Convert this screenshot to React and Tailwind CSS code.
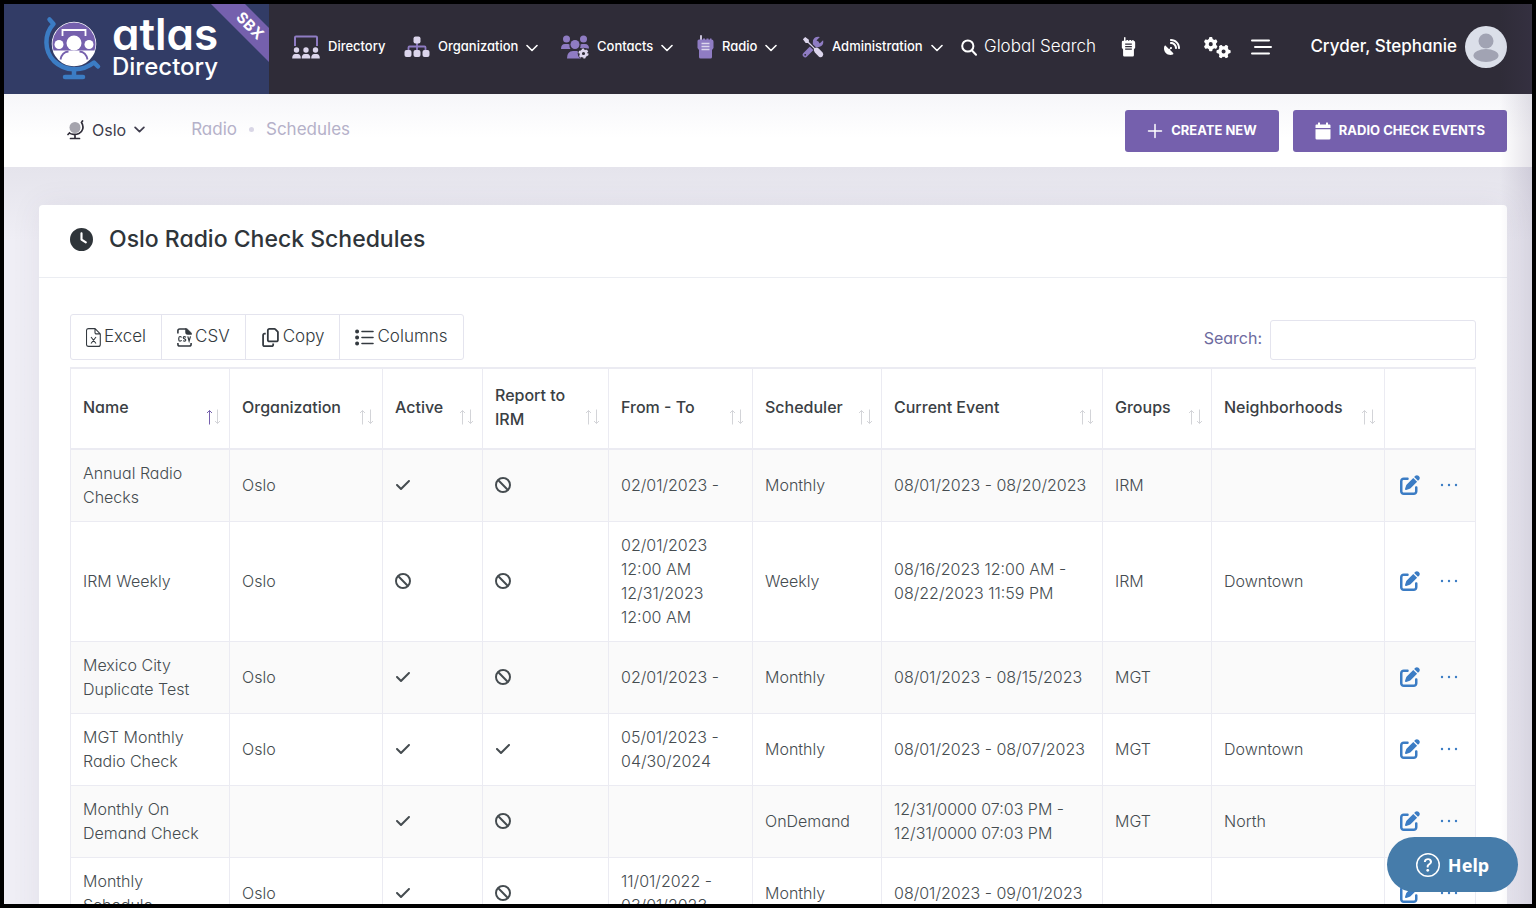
import React from 'react';
import { FaBan, FaCheck, FaClock, FaRegCopy, FaPenToSquare, FaSatelliteDish, FaGears } from 'react-icons/fa6';
import { BsQuestionCircle } from 'react-icons/bs';

const columns = [
  { label: 'Name', width: 'w-[159px]', sorted: true },
  { label: 'Organization', width: 'w-[153px]' },
  { label: 'Active', width: 'w-[100px]' },
  { label: 'Report to IRM', width: 'w-[126px]' },
  { label: 'From - To', width: 'w-[144px]' },
  { label: 'Scheduler', width: 'w-[129px]' },
  { label: 'Current Event', width: 'w-[221px]' },
  { label: 'Groups', width: 'w-[109px]' },
  { label: 'Neighborhoods', width: 'w-[173px]' },
];

const schedules = [
  { name: 'Annual Radio Checks', org: 'Oslo', active: true, report: false, range: ['02/01/2023 -'], scheduler: 'Monthly', event: ['08/01/2023 - 08/20/2023'], group: 'IRM', hood: '' },
  { name: 'IRM Weekly', org: 'Oslo', active: false, report: false, range: ['02/01/2023', '12:00 AM', '12/31/2023', '12:00 AM'], scheduler: 'Weekly', event: ['08/16/2023 12:00 AM -', '08/22/2023 11:59 PM'], group: 'IRM', hood: 'Downtown' },
  { name: 'Mexico City Duplicate Test', org: 'Oslo', active: true, report: false, range: ['02/01/2023 -'], scheduler: 'Monthly', event: ['08/01/2023 - 08/15/2023'], group: 'MGT', hood: '' },
  { name: 'MGT Monthly Radio Check', org: 'Oslo', active: true, report: true, range: ['05/01/2023 -', '04/30/2024'], scheduler: 'Monthly', event: ['08/01/2023 - 08/07/2023'], group: 'MGT', hood: 'Downtown' },
  { name: 'Monthly On Demand Check', org: '', active: true, report: false, range: [], scheduler: 'OnDemand', event: ['12/31/0000 07:03 PM -', '12/31/0000 07:03 PM'], group: 'MGT', hood: 'North' },
  { name: 'Monthly Schedule', org: 'Oslo', active: true, report: false, range: ['11/01/2022 -', '03/01/2023'], scheduler: 'Monthly', event: ['08/01/2023 - 09/01/2023'], group: '', hood: '' },
];

function LogoMark() {
  return (
    <svg viewBox="0 0 60 66" className="h-[66px] w-[60px]" aria-hidden="true">
      <g fill="none" stroke="#3b7cc4" strokeWidth="4.500" strokeLinecap="round" strokeLinejoin="round">
        <path d="M7.500 4.500 L11.500 9 C2 19 2 36 12 46 C23 56.500 40 57 52 47.500 L56 51.500" />
        <path d="M32 54v7" />
        <path d="M23 62h18" />
      </g>
      <circle cx="32" cy="29" r="21.500" fill="#fff" stroke="#fff" strokeWidth="1.500" />
      <path d="M11.500 35.500a21.500 21.500 0 1 1 41 0z" fill="#7560ad" />
      <path d="M20.500 21v-6h23v6" fill="none" stroke="#fff" strokeWidth="1.800" />
      <circle cx="17" cy="29.500" r="4.500" fill="#fff" />
      <circle cx="47" cy="29.500" r="4.500" fill="#fff" />
      <circle cx="32" cy="28" r="7.500" fill="#fff" />
      <path d="M18.500 44.500q1.500-7.500 8-8M45.500 44.500q-1.500-7.500-8-8" fill="none" stroke="#7560ad" strokeWidth="1.800" />
    </svg>
  );
}

function DirectoryIcon() {
  return (
    <svg viewBox="0 0 28 24" className="h-6 w-7" aria-hidden="true">
      <path d="M3 11V2.500Q3 1.500 4 1.500H24Q25 1.500 25 2.500V11" fill="none" stroke="#8f7cc3" strokeWidth="2" />
      {[4.500, 14, 23.500].map((x) => (
        <g key={x} fill="#dcd5ec">
          <circle cx={x} cy="15" r="2.700" />
          <path d={`M${x - 4.300} 23.500q0-4.500 3-4.500h2.600q3 0 3 4.500z`} />
        </g>
      ))}
    </svg>
  );
}

function SitemapIcon() {
  return (
    <svg viewBox="0 0 26 22" className="h-[22px] w-[26px]" aria-hidden="true">
      <path d="M13 6v9M4.500 15v-3.500q0-1 1-1h15q1 0 1 1V15" fill="none" stroke="#8f7cc3" strokeWidth="1.800" />
      <g fill="#dcd5ec">
        <rect x="9.500" y="0.500" width="7" height="7" rx="2" />
        <rect x="0.500" y="14" width="7" height="7" rx="2" />
        <rect x="9.500" y="14" width="7" height="7" rx="2" />
        <rect x="18.500" y="14" width="7" height="7" rx="2" />
      </g>
    </svg>
  );
}

function ContactsIcon() {
  return (
    <svg viewBox="0 0 28 24" className="h-6 w-7" aria-hidden="true">
      <g fill="#8f7cc3">
        <circle cx="5.500" cy="4" r="3.500" />
        <circle cx="22.500" cy="4" r="3.500" />
        <circle cx="14" cy="9.500" r="4.500" />
        <path d="M0 14q0-5 4-5h3q1 0 1.500.5q-.5 3 1 4.500z" />
        <path d="M28 13.500q0-4.500-4-4.500h-3q-1 0-1.500.5q.3 2-.5 3.500z" />
        <path d="M6 23.500q0-7.500 6-7.500h4.500q.8 5 4 7.500z" />
      </g>
      <circle cx="22.500" cy="18.500" r="5.800" fill="#2f2c38" />
      <circle cx="22.500" cy="18.500" r="2.800" fill="none" stroke="#dcd5ec" strokeWidth="2.400" />
      <circle cx="22.500" cy="18.500" r="4.300" fill="none" stroke="#dcd5ec" strokeWidth="1.600" strokeDasharray="2.250 2.250" />
    </svg>
  );
}

function RadioIcon({ className, body, lines, antenna }) {
  return (
    <svg viewBox="0 0 17 24" className={className} aria-hidden="true">
      <path d="M4 1v5" stroke={antenna} strokeWidth="1.800" strokeLinecap="round" />
      <path d="M2 4.500h4V3.500h2v1h1.500v-1h2v1H13v-1h1.500v1q2 .2 2 2V13l-1.500 2v7q0 1.500-1.500 1.500h-10q-1.500 0-1.500-1.500v-7L.5 13V6q0-1.500 1.500-1.500z" fill={body} />
      <path d="M4.500 8.500h8M4.500 11.500h8M4.500 14.500h8" stroke={lines} strokeWidth="1.300" />
    </svg>
  );
}

function ToolsIcon() {
  return (
    <svg viewBox="0 0 24 24" className="h-6 w-[22px]" aria-hidden="true">
      <path d="M3.500 20.500L16 8" stroke="#8f7cc3" strokeWidth="5.500" strokeLinecap="round" />
      <path d="M19.500 1Q14 0 12 4.500Q11 8 13 10.500Q17 13.500 21 11Q24 8.500 23 4.500L19.500 8L16.500 7.500L16 4.500z" fill="#8f7cc3" />
      <circle cx="3.500" cy="20.500" r="1" fill="#2f2c38" />
      <path d="M5 5l9 9" stroke="#2f2c38" strokeWidth="4" />
      <path d="M1 3.500L3.500 1L7.500 4V6.500L14 13Q16.500 12 18.500 14L22.500 18Q24 20 22.500 22T18.500 22.500L14 18Q12.500 16 13 14L6.500 7.500H4z" fill="#dcd5ec" />
    </svg>
  );
}

function SearchIcon() {
  return (
    <svg viewBox="0 0 16 17" className="h-[17px] w-4" fill="none" stroke="#fff" strokeWidth="2" strokeLinecap="round" aria-hidden="true">
      <circle cx="6.800" cy="7" r="5.600" />
      <path d="M11 11.500l4 4.200" />
    </svg>
  );
}

function GlobeIcon() {
  return (
    <svg viewBox="0 0 17 20" className="h-5 w-[17px]" aria-hidden="true">
      <circle cx="8" cy="7.500" r="5.500" fill="#a5a4ad" />
      <path d="M15.500 1l-1 1.500C17.500 7 15.500 12 12 13.500S4 14.500 2.500 13L1 14.500M8 14.500V18M3.500 18.500h9" fill="none" stroke="#2f2c38" strokeWidth="1.700" strokeLinecap="round" />
    </svg>
  );
}

function Chevron({ className, strokeWidth = 1.8 }) {
  return (
    <svg viewBox="0 0 12 8" className={className} fill="none" stroke="currentColor" strokeWidth={strokeWidth} strokeLinecap="round" strokeLinejoin="round" aria-hidden="true">
      <path d="M1 1.500l5 5l5-5" />
    </svg>
  );
}

function ExcelIcon() {
  return (
    <svg viewBox="0 0 15 19" className="h-[19px] w-[15px]" fill="none" stroke="#343a40" strokeWidth="1.100" aria-hidden="true">
      <path d="M2.500.6h6.500l5.300 5.300v10.500q0 2-2 2h-9.800q-2 0-2-2V2.600q0-2 2-2zM9 .8v3.600q0 1.500 1.500 1.500h3.600M5 9l5 6.500M10 9l-5 6.500" />
    </svg>
  );
}

function CsvIcon() {
  return (
    <svg viewBox="0 0 15 19" className="h-[19px] w-[15px]" fill="none" stroke="#343a40" aria-hidden="true">
      <path d="M.9 5.500V2.800Q.9 1 2.700 1H9M14.100 15v1.200q0 1.800-1.800 1.800H2.700Q.9 18 .9 16.200V15" strokeWidth="1.600" />
      <path d="M8.500.5h1.300L14.500 5v1.500h-4q-2 0-2-2z" fill="#343a40" strokeWidth=".5" />
      <path d="M4.500 9.500Q4 8.500 3 8.500T1.800 10v1.700q0 1.500 1.200 1.500t1.500-1M9 9.200q-2.500-1.400-2.700.3q0 1 1.200 1.300t1.300 1.200q-.3 1.800-2.800.7M10.800 8.300l1.300 4.700l1.400-4.700" strokeWidth="1.200" />
    </svg>
  );
}

function ListIcon() {
  return (
    <svg viewBox="0 0 19 17" className="h-[17px] w-[19px]" stroke="#343a40" strokeLinecap="round" aria-hidden="true">
      <path d="M7 2.500h11M7 8.500h11M7 14.500h11" strokeWidth="1.600" />
      <path d="M2 2.500h.2M2 8.500h.2M2 14.500h.2" strokeWidth="3.800" />
    </svg>
  );
}

function SortArrows({ sorted }) {
  return (
    <svg viewBox="0 0 15 16" className="mt-5 h-4 w-[15px] shrink-0" fill="none" strokeWidth="1" aria-hidden="true">
      <path d="M3.500 15.500V1.500M1 4l2.500-2.500l2.500 2.500" stroke={sorted ? '#7560ad' : '#d3d4d8'} />
      <path d="M11.500 .5v14M9 12l2.500 2.500l2.500-2.500" stroke="#d3d4d8" />
    </svg>
  );
}

function NavItem({ icon, label, chevron = true, className }) {
  return (
    <button type="button" className={`flex shrink-0 items-center gap-2 text-[13px] font-medium text-white ${className}`}>
      {icon}
      {label}
      {chevron && <Chevron className="mt-0.5 h-2 w-3" strokeWidth={1.6} />}
    </button>
  );
}

function ActionButton({ icon, children }) {
  return (
    <button type="button" className="flex h-[42px] items-center gap-2 rounded-[3px] bg-[#7560ad] px-[22px] text-[13px] font-bold text-white">
      {icon}
      {children}
    </button>
  );
}

function StatusIcon({ on }) {
  return on ? <FaCheck className="h-4 w-4" aria-label="Yes" /> : <FaBan className="h-4 w-4" aria-label="No" />;
}

function Lines({ items }) {
  return items.map((line, i) => <div key={i} className="whitespace-nowrap">{line}</div>);
}

function Header() {
  return (
    <header className="flex h-[90px] shrink-0 items-center bg-[#2f2c38] pr-[25px]">
      <a href="#" className="relative flex h-full w-[265px] shrink-0 items-center gap-[10px] bg-[#323c66] pb-0.5 pl-[38px] text-white">
        <LogoMark />
        <span className="flex flex-col">
          <span className="text-[44px] leading-[38px] font-semibold">atlas</span>
          <span className="text-[24px] leading-[28px] font-medium">Directory</span>
        </span>
        <span className="absolute top-0 right-0 h-16 w-16 overflow-hidden">
          <span className="absolute top-[10px] -left-[15px] flex h-6 w-[120px] rotate-45 items-center justify-center bg-[#7560ad] text-[15px] font-bold tracking-wide">SBX</span>
        </span>
      </a>
      <nav className="flex items-center pb-1 pl-[23px]">
        <NavItem className="w-[112px]" icon={<DirectoryIcon />} label="Directory" chevron={false} />
        <NavItem className="w-[157px]" icon={<SitemapIcon />} label="Organization" />
        <NavItem className="w-[136px]" icon={<ContactsIcon />} label="Contacts" />
        <NavItem className="w-[105px]" icon={<RadioIcon className="h-6 w-[17px]" body="#8f7cc3" lines="#dcd5ec" antenna="#dcd5ec" />} label="Radio" />
        <NavItem className="w-[159px]" icon={<ToolsIcon />} label="Administration" />
        <button type="button" className="flex shrink-0 items-center gap-[7px] text-[17px] font-light whitespace-nowrap text-white">
          <SearchIcon />
          Global Search
        </button>
      </nav>
      <div className="ml-auto flex shrink-0 items-center pb-1 text-white">
        <button type="button" aria-label="Radios" className="mr-7">
          <RadioIcon className="h-5 w-[15px]" body="#fff" lines="#2f2c38" antenna="#fff" />
        </button>
        <button type="button" aria-label="Satellite" className="mr-6"><FaSatelliteDish className="h-4 w-4" /></button>
        <button type="button" aria-label="Settings" className="mr-5"><FaGears className="h-[27px] w-[27px]" /></button>
        <button type="button" aria-label="Menu" className="mr-[38px]">
          <svg viewBox="0 0 21 16" className="h-4 w-[21px]" stroke="#fff" strokeWidth="2" strokeLinecap="round">
            <path d="M1 1.500h17M4 8h16M1 14.500h17" />
          </svg>
        </button>
        <button type="button" className="flex items-center gap-2 text-[17px] font-medium">
          Cryder, Stephanie
          <svg viewBox="0 0 42 42" className="h-[42px] w-[42px]" aria-hidden="true">
            <circle cx="21" cy="21" r="21" fill="#dbdfe9" />
            <circle cx="21" cy="15" r="7.500" fill="#a1a3b3" />
            <ellipse cx="21" cy="29.500" rx="12.500" ry="6.500" fill="#a1a3b3" />
          </svg>
        </button>
      </div>
    </header>
  );
}

function SubHeader() {
  return (
    <div className="flex h-[73px] shrink-0 items-center bg-gradient-to-b from-[#f6f6f9] to-white to-60% pr-[25px] pl-[63px]">
      <button type="button" className="flex items-center gap-2 pb-0.5 text-base text-[#3f3d4d]">
        <GlobeIcon />
        Oslo
        <Chevron className="h-[7px] w-[11px]" strokeWidth={2} />
      </button>
      <div className="ml-[46px] flex items-center gap-3 pb-0.5 text-[17px] text-[#b5b1c9]">
        <a href="#">Radio</a>
        <span className="h-[5px] w-[5px] rounded-full bg-[#d9d6e6]" />
        <a href="#">Schedules</a>
      </div>
      <div className="ml-auto flex gap-[14px]">
        <ActionButton
          icon={
            <svg viewBox="0 0 16 16" className="h-4 w-4" stroke="#fff" strokeWidth="1.500" strokeLinecap="round" aria-hidden="true">
              <path d="M8 1.500v13M1.500 8h13" />
            </svg>
          }
        >
          CREATE NEW
        </ActionButton>
        <ActionButton
          icon={
            <svg viewBox="0 0 16 18" className="h-[18px] w-4" fill="#fff" aria-hidden="true">
              <path d="M3 1q1-1.500 2 0v1.500h6V1q1-1.500 2 0v1.500h1.500q1 0 1 1V6H.5V3.500q0-1 1-1H3zM.5 7.200h15v9q0 1.300-1.300 1.300H1.800Q.5 17.500.5 16.200z" />
            </svg>
          }
        >
          RADIO CHECK EVENTS
        </ActionButton>
      </div>
    </div>
  );
}

const exportButton = 'flex h-full items-center gap-[3px] px-[15px]';

function Toolbar() {
  return (
    <div className="flex items-end justify-between">
      <div className="flex h-[46px] divide-x divide-[#e4e4ee] rounded-[3px] border border-[#e4e4ee] text-[17px] font-light text-[#343a40]">
        <button type="button" className={exportButton}><ExcelIcon />Excel</button>
        <button type="button" className={exportButton}><CsvIcon />CSV</button>
        <button type="button" className={exportButton}><FaRegCopy className="h-[19px] w-[19px]" />Copy</button>
        <button type="button" className={exportButton}><ListIcon />Columns</button>
      </div>
      <label className="flex items-center gap-2 text-base text-[#6d6a9e]">
        <span className="pb-1">Search:</span>
        <input type="search" className="h-10 w-[206px] rounded-[3px] border border-[#e4e4ee] bg-white px-3" />
      </label>
    </div>
  );
}

function ScheduleTable() {
  return (
    <table className="mt-[7px] w-full table-fixed border-collapse border border-[#ebebf2] text-base leading-6 text-[#454c50]">
      <thead>
        <tr className="h-[81px] border-y-2 border-[#ebebf2]">
          {columns.map((col) => (
            <th key={col.label} className={`border-r border-[#ebebf2] pr-2 pb-1 pl-3 text-left font-medium text-[#3a4044] ${col.width}`}>
              <button type="button" className="flex w-full items-center justify-between text-left">
                {col.label}
                <SortArrows sorted={col.sorted} />
              </button>
            </th>
          ))}
          <th className="w-[91px]" aria-label="Actions" />
        </tr>
      </thead>
      <tbody className="font-light">
        {schedules.map((row) => (
          <tr key={row.name} className="border-b border-[#ebebf2] odd:bg-[#fafafa] [&>td]:border-r [&>td]:border-[#ebebf2] [&>td]:px-3 [&>td]:pt-[11px] [&>td]:pb-3">
            <td>{row.name}</td>
            <td>{row.org}</td>
            <td><StatusIcon on={row.active} /></td>
            <td><StatusIcon on={row.report} /></td>
            <td><Lines items={row.range} /></td>
            <td>{row.scheduler}</td>
            <td><Lines items={row.event} /></td>
            <td>{row.group}</td>
            <td>{row.hood}</td>
            <td>
              <div className="flex items-center gap-5 pl-[3px] text-[#3b7cc4]">
                <button type="button" aria-label={`Edit ${row.name}`}><FaPenToSquare className="h-5 w-5" /></button>
                <button type="button" aria-label={`More actions for ${row.name}`}>
                  <svg viewBox="0 0 18 4" className="h-1 w-[18px]" fill="currentColor">
                    <circle cx="2" cy="2" r="1.200" />
                    <circle cx="9" cy="2" r="1.200" />
                    <circle cx="16" cy="2" r="1.200" />
                  </svg>
                </button>
              </div>
            </td>
          </tr>
        ))}
      </tbody>
    </table>
  );
}

export default function App() {
  return (
    <div className="relative flex h-screen flex-col overflow-hidden border-4 border-black bg-[#efeef5] font-['Inter','Open_Sans',sans-serif] [font-feature-settings:'cv11']">
      <Header />
      <SubHeader />
      <main className="min-h-0 flex-1 bg-gradient-to-b from-[#e5e4ec] to-[#efeef5] to-10% pt-[38px] pr-[25px] pl-[35px]">
        <section className="rounded bg-white shadow-[0_0_30px_rgba(82,63,105,0.08)]">
          <h1 className="flex h-[73px] items-center gap-4 border-b border-[#ebedf2] px-[31px] pb-1 text-[23px] font-medium text-[#2f353a]">
            <FaClock className="h-[23px] w-[23px]" />
            Oslo Radio Check Schedules
          </h1>
          <div className="px-[31px] pt-9 pb-8">
            <Toolbar />
            <ScheduleTable />
          </div>
        </section>
      </main>
      {/* shade along the right edge of the window */}
      <div className="pointer-events-none absolute inset-y-0 right-0 w-8 bg-gradient-to-r from-transparent to-[#52456e]/15" />
      <button type="button" className="absolute right-[14px] bottom-3 flex h-[55px] w-[131px] items-center justify-center gap-2 rounded-full bg-[#467caa] font-['Noto_Sans',sans-serif] text-lg font-bold text-white">
        <BsQuestionCircle className="h-6 w-6" />
        Help
      </button>
    </div>
  );
}
